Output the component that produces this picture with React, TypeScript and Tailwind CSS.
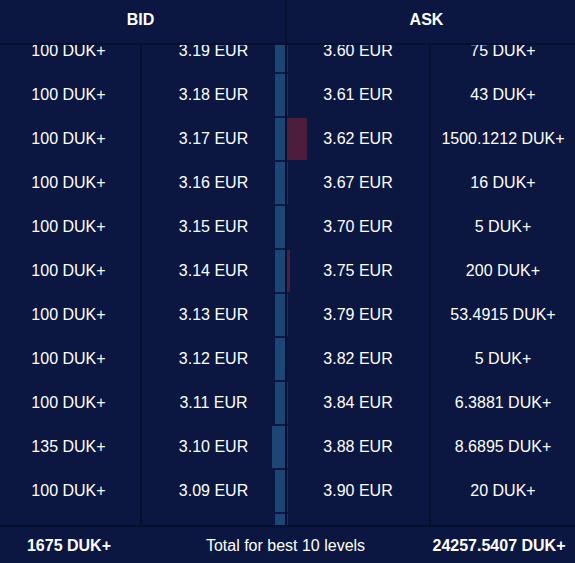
type Level = { bid: string; bidAmt: number; bidPrice: string; askPrice: string; ask: string; askAmt: number };

const levels: Level[] = [
    { bid: "100 DUK+", bidAmt: 100, bidPrice: "3.19 EUR", askPrice: "3.60 EUR", ask: "75 DUK+", askAmt: 75 },
    { bid: "100 DUK+", bidAmt: 100, bidPrice: "3.18 EUR", askPrice: "3.61 EUR", ask: "43 DUK+", askAmt: 43 },
    { bid: "100 DUK+", bidAmt: 100, bidPrice: "3.17 EUR", askPrice: "3.62 EUR", ask: "1500.1212 DUK+", askAmt: 1500.1212 },
    { bid: "100 DUK+", bidAmt: 100, bidPrice: "3.16 EUR", askPrice: "3.67 EUR", ask: "16 DUK+", askAmt: 16 },
    { bid: "100 DUK+", bidAmt: 100, bidPrice: "3.15 EUR", askPrice: "3.70 EUR", ask: "5 DUK+", askAmt: 5 },
    { bid: "100 DUK+", bidAmt: 100, bidPrice: "3.14 EUR", askPrice: "3.75 EUR", ask: "200 DUK+", askAmt: 200 },
    { bid: "100 DUK+", bidAmt: 100, bidPrice: "3.13 EUR", askPrice: "3.79 EUR", ask: "53.4915 DUK+", askAmt: 53.4915 },
    { bid: "100 DUK+", bidAmt: 100, bidPrice: "3.12 EUR", askPrice: "3.82 EUR", ask: "5 DUK+", askAmt: 5 },
    { bid: "100 DUK+", bidAmt: 100, bidPrice: "3.11 EUR", askPrice: "3.84 EUR", ask: "6.3881 DUK+", askAmt: 6.3881 },
    { bid: "135 DUK+", bidAmt: 135, bidPrice: "3.10 EUR", askPrice: "3.88 EUR", ask: "8.6895 DUK+", askAmt: 8.6895 },
    { bid: "100 DUK+", bidAmt: 100, bidPrice: "3.09 EUR", askPrice: "3.90 EUR", ask: "20 DUK+", askAmt: 20 },
    { bid: "100 DUK+", bidAmt: 100, bidPrice: "3.08 EUR", askPrice: "3.95 EUR", ask: "10 DUK+", askAmt: 10 },
];

function Row({ l }: { l: Level }) {
    const bidW = l.bidAmt * 0.1;
    const askW = l.askAmt >= 6 ? Math.max(1, l.askAmt * 0.0133) : 0;
    return (
        <div className="flex h-[44px] items-center">
            <div className="flex h-full w-[142px] items-center justify-center border-r-2 border-[#07102f] pr-[3px]">{l.bid}</div>
            <div className="relative flex h-full w-[143px] items-center justify-center">
                {l.bidPrice}
                <div className="absolute top-px right-0 bottom-px bg-[#1c4675]" style={{ width: bidW }} />
            </div>
            <div className="h-full w-[2px] bg-[#07102f]" />
            <div className="relative flex h-full w-[144px] items-center justify-center border-r-2 border-[#07102f]">
                <div className="absolute top-px bottom-px left-0 bg-[#4d1d3c]" style={{ width: askW }} />
                {l.askPrice}
            </div>
            <div className="flex h-full w-[144px] items-center justify-center">{l.ask}</div>
        </div>
    );
}

export default function App() {
    return (
        <div
            className="flex h-[563px] w-[575px] flex-col overflow-hidden bg-[#0b1740] text-[16px] text-white"
            style={{ fontFamily: '"Liberation Sans", Arial, sans-serif' }}
        >
            <div className="flex h-[45px] shrink-0 border-b-2 border-[#07102f] font-bold">
                <div className="flex w-[285px] items-center justify-center pr-[4px] pb-[3px]">BID</div>
                <div className="w-[2px] bg-[#07102f]" />
                <div className="flex flex-1 items-center justify-center pr-[9px] pb-[3px]">ASK</div>
            </div>

            <div className="min-h-0 flex-1 overflow-hidden">
                <div className="-mt-[16px]">
                    {levels.map((l, i) => (
                        <Row key={i} l={l} />
                    ))}
                </div>
            </div>

            <div className="flex h-[38px] shrink-0 items-center border-t-2 border-[#07102f] pt-px">
                <div className="w-[140px] pr-[2px] text-center font-bold">1675 DUK+</div>
                <div className="flex-1 text-center">Total for best 10 levels</div>
                <div className="w-[144px] pr-[8px] text-center font-bold">24257.5407 DUK+</div>
            </div>
        </div>
    );
}
